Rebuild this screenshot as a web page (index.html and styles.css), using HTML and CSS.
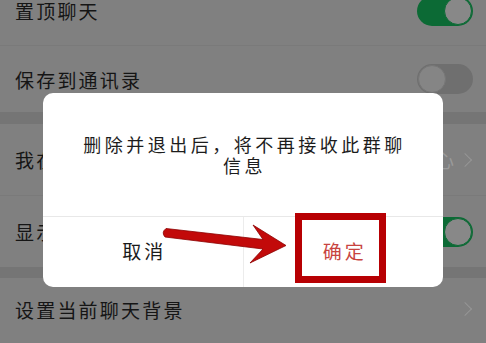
FILE: index.html
```html
<!DOCTYPE html>
<html lang="zh-CN">
<head>
<meta charset="utf-8">
<title>群聊设置</title>
<link rel="stylesheet" href="styles.css">
</head>
<body>
<div class="page">
  <div class="list">
    <div class="group g1">
      <div class="row r1">
        <span class="label">置顶聊天</span>
        <span class="toggle on"><span class="knob"></span></span>
      </div>
      <div class="row r2">
        <span class="label">保存到通讯录</span>
        <span class="toggle off"><span class="knob"></span></span>
      </div>
    </div>
    <div class="group g2">
      <div class="row r3">
        <span class="label">我在本群的昵称</span>
        <span class="value">开心<span class="chev"></span></span>
      </div>
      <div class="row r4">
        <span class="label">显示群成员昵称</span>
        <span class="toggle on"><span class="knob"></span></span>
      </div>
    </div>
    <div class="group g3">
      <div class="row r5">
        <span class="label">设置当前聊天背景</span>
        <span class="chev"></span>
      </div>
    </div>
  </div>

  <div class="dialog">
    <div class="message">删除并退出后，将不再接收此群聊信息</div>
    <div class="actions">
      <div class="btn cancel">取消</div>
      <div class="btn ok">确定</div>
    </div>
  </div>

  <div class="highlight"></div>
  <svg class="arrow" width="486" height="343" viewBox="0 0 486 343" xmlns="http://www.w3.org/2000/svg">
    <path d="M166 228.5 L263 239.5 L253 225 L286 245.5 L250 263 L263 249 L165 237 Q161 232.5 166 228.5 Z" fill="#c20a0a" stroke="#8c0000" stroke-width="0.8" stroke-linejoin="round"/>
  </svg>
</div>
</body>
</html>
```
FILE: styles.css
```css
html, body {
  margin: 0;
  padding: 0;
}
body {
  width: 486px;
  height: 343px;
  overflow: hidden;
  background: #808080;
  font-family: "Noto Sans CJK SC", "Noto Sans", sans-serif;
}
.page {
  position: relative;
  width: 486px;
  height: 343px;
  overflow: hidden;
}
.list {
  display: flex;
  flex-direction: column;
  margin-top: -24px;
  background: #757575;
}
.group {
  display: flex;
  flex-direction: column;
  background: #808080;
}
.g2 {
  margin-top: 12px;
}
.g3 {
  margin-top: 11px;
}
.row {
  box-sizing: border-box;
  display: flex;
  align-items: center;
  justify-content: space-between;
  padding: 0 13px 0 15px;
}
.row + .row {
  border-top: 1px solid #7a7a7a;
}
.r1 { height: 69px; }
.r2 { height: 67px; }
.r3 { height: 71px; }
.r4 { height: 72px; }
.r5 { height: 62px; }
.label {
  font-size: 19px;
  letter-spacing: 2.2px;
  color: #151515;
}
.toggle {
  width: 56px;
  height: 30px;
  border-radius: 15px;
  box-sizing: border-box;
  display: flex;
  align-items: center;
  padding: 1px;
}
.toggle .knob {
  width: 28px;
  height: 28px;
  border-radius: 50%;
  box-sizing: border-box;
  background: #888888;
}
.toggle.on {
  background: #0c6a35;
  justify-content: flex-end;
}
.toggle.on .knob {
  border: 1.5px solid #0c6a35;
}
.toggle.off {
  background: #6f6f6f;
  justify-content: flex-start;
}
.toggle.off .knob {
  border: 1.5px solid #767676;
  background: #858585;
}
.value {
  display: flex;
  align-items: center;
  gap: 6px;
  font-size: 19px;
  color: #9a9a9a;
}
.chev {
  width: 9px;
  height: 9px;
  border-top: 1.5px solid #959595;
  border-right: 1.5px solid #959595;
  transform: rotate(45deg);
  margin-right: 3px;
}
.dialog {
  position: absolute;
  left: 43px;
  top: 93px;
  width: 400px;
  height: 194px;
  background: #ffffff;
  border-radius: 10px;
  display: flex;
  flex-direction: column;
  overflow: hidden;
}
.message {
  height: 124px;
  box-sizing: border-box;
  padding: 0 36px 0 39px;
  display: flex;
  align-items: center;
  justify-content: center;
  text-align: center;
  font-size: 18px;
  line-height: 21px;
  letter-spacing: 3.5px;
  color: #1c1c1c;
  border-bottom: 1px solid #e8e8e8;
}
.actions {
  flex: 1;
  display: flex;
}
.btn {
  flex: 1;
  display: flex;
  align-items: center;
  justify-content: center;
  font-size: 19px;
  letter-spacing: 3px;
  padding-left: 3px;
  padding-bottom: 3px;
}
.cancel {
  color: #1a1a1a;
  border-right: 1px solid #ececec;
}
.ok {
  color: #c8443f;
}
.highlight {
  position: absolute;
  left: 295px;
  top: 213px;
  width: 91px;
  height: 70px;
  box-sizing: border-box;
  border: 7px solid #b70003;
}
.arrow {
  position: absolute;
  left: 0;
  top: 0;
  pointer-events: none;
}
```
